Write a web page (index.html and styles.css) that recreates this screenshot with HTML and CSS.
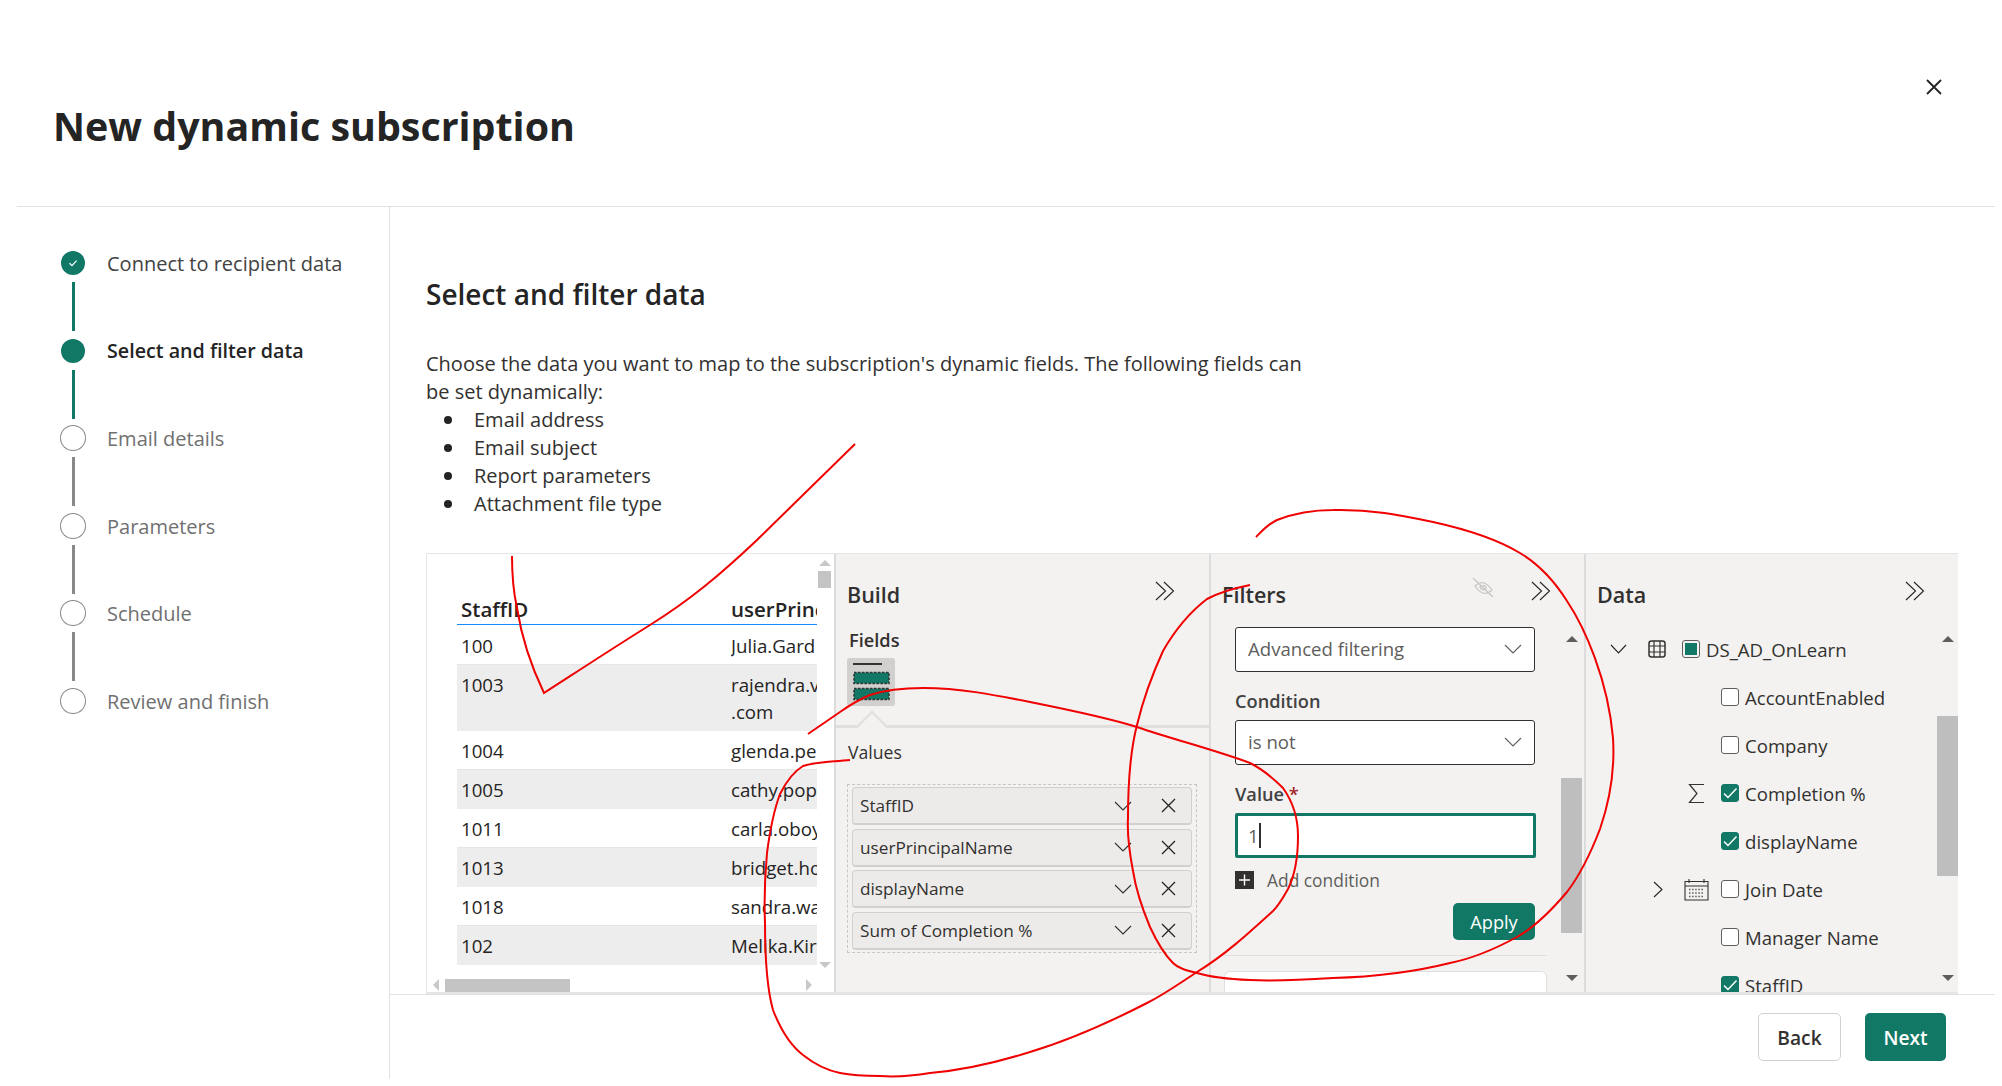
FILE: index.html
```html
<!DOCTYPE html>
<html lang="en">
<head>
  <meta charset="UTF-8" />
  <title>New dynamic subscription</title>
  <link rel="stylesheet" href="styles.css">
</head>
<body>
  <div class="dialog">
    <header class="dialog-header">
      <h1>New dynamic subscription</h1>
      <button class="close-button" aria-label="Close">
        <svg width="18" height="18" viewBox="0 0 18 18"><path d="M2 2L16 16M16 2L2 16" stroke="#242424" stroke-width="1.8" fill="none"/></svg>
      </button>
    </header>

    <div class="dialog-main">
      <nav class="stepper">
        <div class="step done">
          <div class="step-track">
            <span class="step-dot"><svg width="12" height="12" viewBox="0 0 12 12"><path d="M2.5 6.2L5 8.6L9.6 3.6" stroke="#fff" stroke-width="1.2" fill="none"/></svg></span>
            <span class="step-line"></span>
          </div>
          <span class="step-label">Connect to recipient data</span>
        </div>
        <div class="step active">
          <div class="step-track"><span class="step-dot"></span><span class="step-line"></span></div>
          <span class="step-label">Select and filter data</span>
        </div>
        <div class="step">
          <div class="step-track"><span class="step-dot"></span><span class="step-line"></span></div>
          <span class="step-label">Email details</span>
        </div>
        <div class="step">
          <div class="step-track"><span class="step-dot"></span><span class="step-line"></span></div>
          <span class="step-label">Parameters</span>
        </div>
        <div class="step">
          <div class="step-track"><span class="step-dot"></span><span class="step-line"></span></div>
          <span class="step-label">Schedule</span>
        </div>
        <div class="step">
          <div class="step-track"><span class="step-dot"></span></div>
          <span class="step-label">Review and finish</span>
        </div>
      </nav>

      <main class="content">
        <div class="content-body">
          <h2>Select and filter data</h2>
          <p class="intro">Choose the data you want to map to the subscription's dynamic fields. The following fields can be set dynamically:</p>
          <ul class="field-list">
            <li>Email address</li>
            <li>Email subject</li>
            <li>Report parameters</li>
            <li>Attachment file type</li>
          </ul>

          <section class="report-frame">
            <div class="table-pane">
              <div class="table-top">
                <div class="data-table">
                  <div class="table-head"><span>StaffID</span><span>userPrinc</span></div>
                  <div class="table-row"><span>100</span><span>Julia.Gard</span></div>
                  <div class="table-row alt tall"><span>1003</span><span>rajendra.v<br>.com</span></div>
                  <div class="table-row"><span>1004</span><span>glenda.pe</span></div>
                  <div class="table-row alt"><span>1005</span><span>cathy.pop</span></div>
                  <div class="table-row"><span>1011</span><span>carla.oboy</span></div>
                  <div class="table-row alt"><span>1013</span><span>bridget.ho</span></div>
                  <div class="table-row"><span>1018</span><span>sandra.wa</span></div>
                  <div class="table-row alt"><span>102</span><span>Melika.Kir</span></div>
                </div>
                <div class="table-vscroll">
                  <i class="arrow up light"></i>
                  <b class="thumb"></b>
                  <i class="arrow down light"></i>
                </div>
              </div>
              <div class="table-hscroll">
                <i class="arrow left light"></i>
                <b class="thumb"></b>
                <i class="arrow right light"></i>
              </div>
            </div>

            <div class="pane build-pane">
              <div class="pane-head">
                <h3>Build</h3>
                <svg class="collapse" width="20" height="20" viewBox="0 0 20 20"><path d="M1 1L10.5 10L1 19M9 1L18.5 10L9 19" stroke="#242424" stroke-width="1.1" fill="none"/></svg>
              </div>
              <div class="fields-label">Fields</div>
              <div class="visual-tile">
                <svg width="48" height="48" viewBox="0 0 48 48">
                  <path d="M6 6H35" stroke="#333" stroke-width="2"/>
                  <rect x="7" y="14.5" width="35" height="11" fill="#117865" stroke="#333" stroke-width="1.5" stroke-dasharray="2.5 1.5"/>
                  <rect x="7" y="30.5" width="35" height="11" fill="#117865" stroke="#333" stroke-width="1.5" stroke-dasharray="2.5 1.5"/>
                </svg>
              </div>
              <div class="tile-rule"></div>
              <div class="values-label">Values</div>
              <div class="values-well">
                <div class="field-pill"><span>StaffID</span>
                  <svg class="pill-chevron" width="18" height="10" viewBox="0 0 18 10"><path d="M1 1L9 9L17 1" stroke="#323130" stroke-width="1.1" fill="none"/></svg>
                  <svg class="pill-x" width="15" height="15" viewBox="0 0 15 15"><path d="M1 1L14 14M14 1L1 14" stroke="#242424" stroke-width="1.3" fill="none"/></svg></div>
                <div class="field-pill"><span>userPrincipalName</span>
                  <svg class="pill-chevron" width="18" height="10" viewBox="0 0 18 10"><path d="M1 1L9 9L17 1" stroke="#323130" stroke-width="1.1" fill="none"/></svg>
                  <svg class="pill-x" width="15" height="15" viewBox="0 0 15 15"><path d="M1 1L14 14M14 1L1 14" stroke="#242424" stroke-width="1.3" fill="none"/></svg></div>
                <div class="field-pill"><span>displayName</span>
                  <svg class="pill-chevron" width="18" height="10" viewBox="0 0 18 10"><path d="M1 1L9 9L17 1" stroke="#323130" stroke-width="1.1" fill="none"/></svg>
                  <svg class="pill-x" width="15" height="15" viewBox="0 0 15 15"><path d="M1 1L14 14M14 1L1 14" stroke="#242424" stroke-width="1.3" fill="none"/></svg></div>
                <div class="field-pill"><span>Sum of Completion %</span>
                  <svg class="pill-chevron" width="18" height="10" viewBox="0 0 18 10"><path d="M1 1L9 9L17 1" stroke="#323130" stroke-width="1.1" fill="none"/></svg>
                  <svg class="pill-x" width="15" height="15" viewBox="0 0 15 15"><path d="M1 1L14 14M14 1L1 14" stroke="#242424" stroke-width="1.3" fill="none"/></svg></div>
              </div>
            </div>

            <div class="pane filters-pane">
              <div class="pane-head">
                <h3>Filters</h3>
                <svg class="eye-off" width="22" height="22" viewBox="0 0 22 22"><path d="M1 1L21 20M3 9C6 6 9 5 12 6C15 7 18 10 20 13C17 16 14 17 11 16C8 15 5 12 3 9ZM8 9C8 13 13 14 14 11C14 9 12 8 10 9" stroke="#c8c6c4" stroke-width="1.3" fill="none"/></svg>
                <svg class="collapse" width="20" height="20" viewBox="0 0 20 20"><path d="M1 1L10.5 10L1 19M9 1L18.5 10L9 19" stroke="#242424" stroke-width="1.1" fill="none"/></svg>
              </div>
              <div class="pane-scroll">
                <div class="filter-form">
                  <div class="dropdown"><span>Advanced filtering</span><svg width="18" height="10" viewBox="0 0 18 10"><path d="M1 1L9 9L17 1" stroke="#605e5c" stroke-width="1.1" fill="none"/></svg></div>
                  <div class="form-label">Condition</div>
                  <div class="dropdown"><span>is not</span><svg width="18" height="10" viewBox="0 0 18 10"><path d="M1 1L9 9L17 1" stroke="#605e5c" stroke-width="1.1" fill="none"/></svg></div>
                  <div class="form-label">Value <em>*</em></div>
                  <div class="value-input">1<i class="caret"></i></div>
                  <div class="add-condition">
                    <svg width="19" height="18" viewBox="0 0 19 18"><rect width="19" height="18" fill="#323130"/><path d="M9.5 3.5V14.5M4 9H15" stroke="#fff" stroke-width="1.4"/></svg>
                    <span>Add condition</span>
                  </div>
                  <button class="apply-button">Apply</button>
                  <div class="filter-rule"></div>
                  <div class="filter-card"></div>
                </div>
                <div class="vscroll filters-scroll">
                  <i class="arrow up"></i>
                  <b class="thumb"></b>
                  <i class="arrow down"></i>
                </div>
              </div>
            </div>

            <div class="pane data-pane">
              <div class="pane-head">
                <h3>Data</h3>
                <svg class="collapse" width="20" height="20" viewBox="0 0 20 20"><path d="M1 1L10.5 10L1 19M9 1L18.5 10L9 19" stroke="#242424" stroke-width="1.1" fill="none"/></svg>
              </div>
              <div class="pane-scroll">
                <div class="tree">
                  <div class="tree-row parent">
                    <svg class="col-expand" width="17" height="10" viewBox="0 0 17 10"><path d="M1 1L8.5 9L16 1" stroke="#242424" stroke-width="1.1" fill="none"/></svg>
                    <svg class="col-type" width="18" height="18" viewBox="0 0 18 18"><rect x="1" y="1" width="16" height="16" rx="2.5" fill="none" stroke="#323130" stroke-width="1.5"/><path d="M6 1V17M12 1V17M1 6H17M1 12H17" stroke="#323130" stroke-width="1.2"/></svg>
                    <span class="check partial col-check"></span>
                    <span class="col-label">DS_AD_OnLearn</span>
                  </div>
                  <div class="tree-row"><span class="check col-check"></span><span class="col-label">AccountEnabled</span></div>
                  <div class="tree-row"><span class="check col-check"></span><span class="col-label">Company</span></div>
                  <div class="tree-row">
                    <svg class="col-type" width="25" height="21" viewBox="0 0 25 21"><path d="M20 1.5H5.5L13 10.5L5.5 19.5H20" stroke="#323130" stroke-width="1.2" fill="none"/></svg>
                    <span class="check on col-check"><svg width="18" height="18" viewBox="0 0 18 18"><path d="M3 9.5L7 13.5L15.5 4.5" stroke="#fff" stroke-width="1.5" fill="none"/></svg></span>
                    <span class="col-label">Completion %</span>
                  </div>
                  <div class="tree-row">
                    <span class="check on col-check"><svg width="18" height="18" viewBox="0 0 18 18"><path d="M3 9.5L7 13.5L15.5 4.5" stroke="#fff" stroke-width="1.5" fill="none"/></svg></span>
                    <span class="col-label">displayName</span>
                  </div>
                  <div class="tree-row">
                    <svg class="col-expand" width="10" height="17" viewBox="0 0 10 17"><path d="M1 1L9 8.5L1 16" stroke="#242424" stroke-width="1.1" fill="none"/></svg>
                    <svg class="col-type" width="25" height="23" viewBox="0 0 25 23"><path d="M1 3.5H24V22H1ZM1 8H24M5 1V5M20 1V5" stroke="#323130" stroke-width="1.1" fill="none"/><path d="M5 11.5H20M5 15H20M5 18.5H20" stroke="#605e5c" stroke-width="1.4" stroke-dasharray="1.5 1.6" fill="none"/></svg>
                    <span class="check col-check"></span>
                    <span class="col-label">Join Date</span>
                  </div>
                  <div class="tree-row"><span class="check col-check"></span><span class="col-label">Manager Name</span></div>
                  <div class="tree-row">
                    <span class="check on col-check"><svg width="18" height="18" viewBox="0 0 18 18"><path d="M3 9.5L7 13.5L15.5 4.5" stroke="#fff" stroke-width="1.5" fill="none"/></svg></span>
                    <span class="col-label">StaffID</span>
                  </div>
                </div>
                <div class="vscroll data-scroll">
                  <i class="arrow up"></i>
                  <b class="thumb"></b>
                  <i class="arrow down"></i>
                </div>
              </div>
            </div>
          </section>
        </div>

        <footer class="wizard-footer">
          <button class="back-button">Back</button>
          <button class="next-button">Next</button>
        </footer>
      </main>
    </div>
  </div>

  <!-- red pen marks drawn on top of the dialog -->
  <svg class="ink" width="2002" height="1086" viewBox="0 0 2002 1086">
    <path d="M855 444L757 540C720 575 690 600 650 625C610 650 575 673 544 693C532 668 522 640 517 608C513 590 512 575 512 556"/>
    <path d="M808 734C818 727 830 719 840 712C850 705 860 699 870 695C885 690 905 688 923 688C960 688 995 695 1030 702C1070 710 1105 717 1137 727C1175 740 1215 750 1250 763C1262 769 1274 779 1283 788C1293 802 1298 820 1298 836C1298 855 1295 875 1288 889C1283 898 1279 905 1273 911C1250 932 1225 955 1197 972C1180 983 1165 994 1147 1003C1110 1022 1070 1040 1030 1052C995 1063 965 1070 930 1073C912 1076 895 1077 880 1076C865 1076 850 1075 840 1073C825 1070 813 1063 803 1055C790 1045 780 1028 773 1010C766 985 765 955 765 923C764 900 765 875 767 853C770 830 774 810 780 794C786 782 793 772 803 766C815 762 830 762 850 760"/>
    <path d="M1256 537C1262 531 1268 524 1277 520C1295 513 1315 510 1333 510C1370 509 1400 515 1433 522C1465 529 1495 538 1520 553C1540 565 1555 582 1567 601C1585 628 1608 680 1613 738C1615 770 1610 800 1600 829C1590 855 1580 875 1567 892C1550 912 1535 927 1517 937C1495 949 1475 958 1450 963C1410 973 1370 977 1333 978C1300 980 1270 981 1250 980C1225 979 1210 977 1197 973C1185 970 1178 968 1173 963C1162 952 1156 940 1150 927C1142 908 1136 890 1133 871C1129 850 1127 835 1128 818C1128 780 1130 752 1137 725C1143 700 1152 675 1163 651C1175 630 1190 612 1207 599C1220 592 1235 588 1250 585"/>
  </svg>
</body>
</html>
```

FILE: styles.css
```css
* {
  box-sizing: border-box;
}

html, body {
  margin: 0;
  height: 100%;
}

body {
  font-family: 'Open Sans', 'Noto Sans', sans-serif;
  background: white;
  color: #323130;
  overflow: hidden;
  position: relative;
}

button {
  font-family: inherit;
}

.dialog {
  height: 1079px;
  margin: 0 7px 0 17px;
  display: flex;
  flex-direction: column;
}

.dialog-header {
  height: 207px;
  flex: none;
  border-bottom: 1px solid #e1e1e1;
  padding: 101px 0 0 36px;
  position: relative;
}

.dialog-header h1 {
  margin: 0;
  font-size: 39.4px;
  line-height: 50px;
  font-weight: 700;
  color: #242424;
}

.close-button {
  position: absolute;
  top: 78px;
  right: 52px;
  width: 18px;
  height: 18px;
  padding: 0;
  border: none;
  background: none;
  display: flex;
}

.dialog-main {
  flex: 1;
  display: flex;
  min-height: 0;
}

/* left stepper */
.stepper {
  width: 373px;
  flex: none;
  border-right: 1px solid #e1e1e1;
  padding: 44px 0 0 44px;
}

.step {
  height: 87.5px;
  display: flex;
  gap: 22px;
  color: #707070;
}

.step-track {
  width: 24px;
  display: flex;
  flex-direction: column;
  align-items: center;
}

.step-dot {
  width: 24px;
  height: 24px;
  flex: none;
  border-radius: 50%;
  background: white;
  box-shadow: 0 0 0 1px #8a8886;
  display: flex;
  align-items: center;
  justify-content: center;
}

.step-line {
  width: 3px;
  height: 49px;
  margin-top: 7px;
  background: #8a8886;
}

.step-label {
  font-size: 20px;
  line-height: 26px;
}

.step.done .step-dot,
.step.active .step-dot {
  background: #117865;
  box-shadow: none;
}

.step.done .step-line,
.step.active .step-line {
  background: #117865;
}

.step.done {
  color: #424242;
}

.step.active {
  color: #242424;
  font-weight: 600;
}

.step.active .step-label {
  font-size: 19.7px;
  line-height: 24px;
}

/* right side */
.content {
  flex: 1;
  min-width: 0;
  display: flex;
  flex-direction: column;
}

.content-body {
  flex: none;
  height: 787px;
  padding: 68px 37px 0 36px;
}

.content-body h2 {
  margin: 0;
  font-size: 28px;
  line-height: 38px;
  font-weight: 600;
  color: #242424;
}

.intro {
  margin: 37px 0 0;
  width: 880px;
  font-size: 20px;
  line-height: 28px;
}

.field-list {
  margin: 0;
  padding: 0 0 0 48px;
  list-style: none;
  font-size: 20px;
  line-height: 28px;
}

.field-list li {
  display: flex;
  align-items: center;
}

.field-list li::before {
  content: "";
  width: 8px;
  height: 8px;
  flex: none;
  margin: 0 22px 0 -30px;
  border-radius: 50%;
  background: #242424;
}

.report-frame {
  margin-top: 35px;
  height: 442px;
  display: flex;
  border: 1px solid #e6e6e6;
  border-width: 1px 0 3px 1px;
  border-color: #e6e6e6;
  overflow: hidden;
}

/* table visual */
.table-pane {
  width: 407px;
  flex: none;
  background: white;
  display: flex;
  flex-direction: column;
}

.table-top {
  display: flex;
  padding-left: 30px;
}

.data-table {
  width: 360px;
  flex: none;
  padding-top: 43px;
  font-size: 18.7px;
  overflow: hidden;
}

.table-head {
  display: grid;
  grid-template-columns: 274px 86px;
  height: 28px;
  border-bottom: 1px solid #118dff;
  font-size: 20.5px;
  font-weight: 600;
  line-height: 24px;
  color: #252423;
  white-space: nowrap;
}

.table-row {
  display: grid;
  grid-template-columns: 274px 86px;
  height: 38.5px;
  line-height: 27px;
  padding-top: 6px;
  color: #252423;
  white-space: nowrap;
  overflow: hidden;
}

.table-head + .table-row {
  padding-top: 7px;
}

.table-head span:first-child,
.table-row span:first-child {
  padding-left: 4px;
}

.table-row span:last-child,
.table-head span:last-child {
  overflow: hidden;
}

.table-row.alt {
  height: 39.5px;
  background: #ededed;
  border-top: 1px solid #e6e6e6;
}

.table-row.tall {
  height: 67px;
}

.table-vscroll {
  width: 15px;
  height: 425px;
  display: flex;
  flex-direction: column;
  align-items: center;
  padding-top: 6px;
}

.table-vscroll .thumb {
  width: 13px;
  height: 17px;
  margin-top: 5px;
  background: #c4c4c4;
}

.table-vscroll .arrow.down {
  margin-top: auto;
  margin-bottom: 11px;
}

.table-hscroll {
  display: flex;
  align-items: center;
  height: 14px;
  margin-top: -1px;
  padding-left: 6px;
}

.table-hscroll .thumb {
  width: 125px;
  height: 13px;
  margin-left: 6px;
  background: #c4c4c4;
}

.table-hscroll .arrow.right {
  margin-left: 236px;
}

.arrow {
  display: block;
  width: 0;
  height: 0;
  flex: none;
  border: 6px solid transparent;
}

.arrow.up {
  border-top: 0;
  border-bottom: 6px solid #605e5c;
}

.arrow.down {
  border-bottom: 0;
  border-top: 6px solid #605e5c;
}

.arrow.left {
  border-left: 0;
  border-right: 6px solid #c8c8c8;
}

.arrow.right {
  border-right: 0;
  border-left: 6px solid #c8c8c8;
}

.arrow.up.light {
  border-bottom-color: #c8c8c8;
}

.arrow.down.light {
  border-top-color: #c8c8c8;
}

/* build, filters and data panes */
.pane {
  width: 375px;
  flex: none;
  background: #f3f2f1;
  border-left: 2px solid #dcdcdc;
  display: flex;
  flex-direction: column;
  overflow: hidden;
}

.build-pane {
  padding: 0 0 0 11px;
}

.pane-head {
  display: flex;
  align-items: flex-start;
  height: 56px;
  padding-top: 26px;
  flex: none;
}

.filters-pane .pane-head,
.data-pane .pane-head {
  padding-left: 11px;
}

.data-pane {
  width: 374px;
}

.pane-head h3 {
  margin: 0;
  flex: 1;
  font-size: 21.5px;
  line-height: 30px;
  font-weight: 600;
  color: #323130;
}

.collapse {
  margin-top: 1px;
  margin-right: 33px;
}

.build-pane .collapse {
  margin-right: 34px;
}

.eye-off {
  margin-top: -3px;
  margin-right: 37px;
}

.fields-label {
  margin-top: 18px;
  font-size: 18.2px;
  line-height: 24px;
  font-weight: 600;
  padding-left: 2px;
}

.visual-tile {
  margin-top: 6px;
  width: 48px;
  height: 48px;
  border-radius: 3px;
  background: #d2d0ce;
}

.tile-rule {
  height: 3px;
  margin: 19px 0 0 -11px;
  background: #e1dfdd;
  position: relative;
}

.tile-rule::before {
  content: "";
  position: absolute;
  left: 25px;
  top: -10px;
  width: 20px;
  height: 20px;
  background: #f3f2f1;
  border: solid #e1dfdd;
  border-width: 2px 0 0 2px;
  transform: rotate(45deg);
}

.values-label {
  margin-top: 12px;
  padding-left: 1px;
  font-size: 17.6px;
  line-height: 24px;
  position: relative;
}

.values-well {
  margin-top: 20px;
  width: 350px;
  border: 1px dashed #c8c6c4;
  padding: 2px 4px;
  display: flex;
  flex-direction: column;
  gap: 3.5px;
}

.field-pill {
  height: 38px;
  display: flex;
  align-items: center;
  padding: 0 15px 0 7px;
  background: #edebe9;
  border: 1px solid #d2d0ce;
  border-bottom-width: 2px;
  border-radius: 4px;
  font-size: 17.2px;
  color: #323130;
}

.field-pill span {
  flex: 1;
}

.pill-x {
  margin-left: 29.5px;
}

/* filter form */
.pane-scroll {
  flex: 1;
  min-height: 0;
  display: flex;
}

.filter-form {
  flex: 1;
  min-width: 0;
  padding: 17px 0 0 24px;
  overflow: hidden;
}

.dropdown {
  width: 300px;
  height: 45px;
  display: flex;
  align-items: center;
  justify-content: space-between;
  padding: 0 12px 2px 12px;
  background: white;
  border: 1.5px solid #323130;
  border-radius: 3px;
  font-size: 18.6px;
  color: #605e5c;
}

.form-label {
  margin: 17px 0 7px;
  font-size: 18.2px;
  line-height: 24px;
  font-weight: 600;
  color: #424242;
}

.form-label em {
  font-style: normal;
  color: #a4262c;
}

.value-input {
  width: 301px;
  height: 45px;
  display: flex;
  align-items: center;
  padding-left: 10px;
  background: white;
  border: 3px solid #117865;
  border-radius: 2px;
  font-size: 18.6px;
  color: #605e5c;
}

.caret {
  width: 2px;
  height: 25px;
  background: #323130;
}

.add-condition {
  margin-top: 13px;
  display: flex;
  align-items: center;
  gap: 13px;
  height: 18px;
  font-size: 17.4px;
  color: #605e5c;
}

.apply-button {
  display: block;
  width: 82px;
  height: 37px;
  margin: 14px 0 0 218px;
  padding: 0;
  border: none;
  border-radius: 5px;
  background: #117865;
  color: white;
  font-size: 18.2px;
}

.filter-rule {
  height: 1px;
  margin: 15px 0 0 -11px;
  width: 323px;
  background: #e1dfdd;
}

.filter-card {
  height: 40px;
  margin: 15px 0 0 -11px;
  width: 323px;
  background: white;
  border: 1px solid #e1dfdd;
  border-radius: 6px 6px 0 0;
}

.vscroll {
  width: 21px;
  flex: none;
  display: flex;
  flex-direction: column;
  align-items: center;
  padding: 26px 0 11px;
}

.vscroll .thumb {
  width: 21px;
  background: #bebebe;
}

.vscroll .arrow.down {
  margin-top: auto;
}

.filters-scroll {
  margin-right: 2px;
}

.filters-scroll .thumb {
  height: 155px;
  margin-top: 136px;
}

.data-scroll .thumb {
  height: 160px;
  margin-top: 74px;
}

/* data tree */
.tree {
  flex: 1;
  min-width: 0;
  padding-top: 15px;
  overflow: hidden;
}

.tree-row {
  display: grid;
  grid-template-columns: 64px 16px 18px 25px 12px 18px 6px 1fr;
  align-items: center;
  height: 48px;
  font-size: 18.6px;
  color: #323130;
}

.tree-row.parent {
  grid-template-columns: 24px 17px 21px 18px 16px 18px 6px 1fr;
}

.col-expand {
  grid-column: 2;
  grid-row: 1;
  justify-self: center;
}

.col-type {
  grid-column: 4;
  grid-row: 1;
}

.col-check {
  grid-column: 6;
  grid-row: 1;
}

.col-label {
  grid-column: 8;
  grid-row: 1;
  white-space: nowrap;
}

.check {
  width: 18px;
  height: 18px;
  display: block;
  background: white;
  border: 1px solid #605e5c;
  border-radius: 3px;
}

.check svg {
  display: block;
  margin: -1px;
}

.check.on {
  background: #117865;
  border-color: #117865;
}

.check.partial {
  padding: 2px;
  background: #117865;
  background-clip: content-box;
}

/* footer */
.wizard-footer {
  flex: 1;
  display: flex;
  justify-content: flex-end;
  gap: 24px;
  padding: 18px 49px 0 0;
  border-top: 1px solid #e1e1e1;
}

.back-button,
.next-button {
  height: 48px;
  border-radius: 5px;
  font-size: 19.2px;
  font-weight: 600;
  padding: 0;
}

.back-button {
  width: 83px;
  background: white;
  border: 1px solid #d1d1d1;
  color: #323130;
}

.next-button {
  width: 81px;
  background: #117865;
  border: none;
  color: white;
}

.ink {
  position: absolute;
  left: 0;
  top: 0;
  pointer-events: none;
  fill: none;
  stroke: #f00000;
  stroke-width: 2;
}
```
